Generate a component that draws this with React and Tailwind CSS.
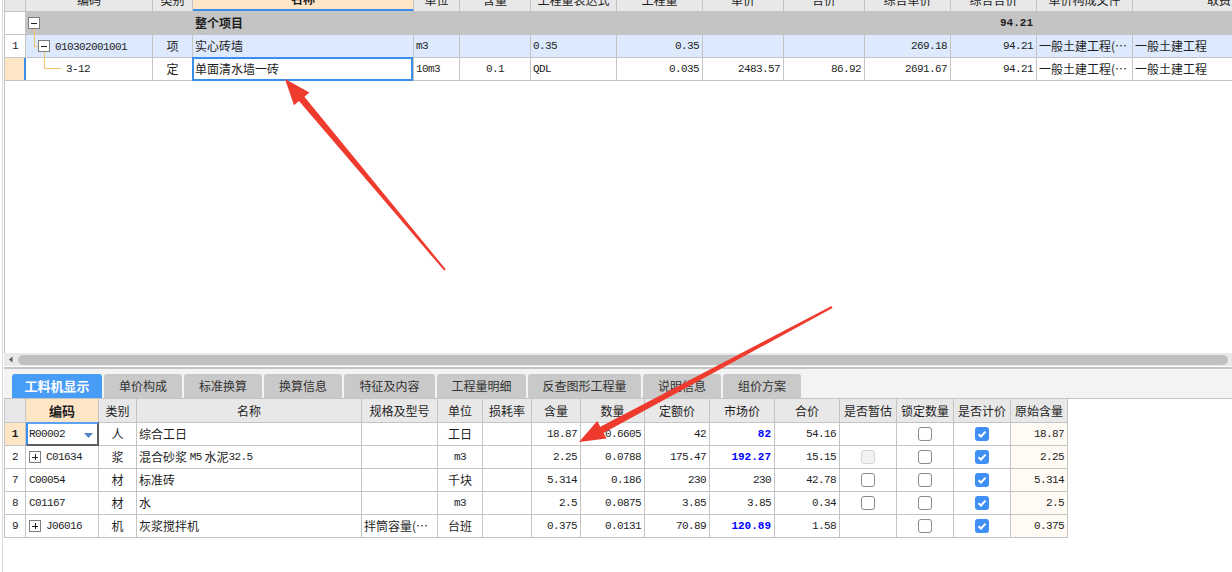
import React from "react";

const mono = "font-['Liberation_Mono',monospace] text-[11px] tracking-[-0.6px]";
const monoB = "font-['Liberation_Mono',monospace] text-[11px] font-bold";

const topW = [
  "w-[21px]", "w-[127px]", "w-[40px]", "w-[221px]", "w-[46px]", "w-[71px]", "w-[86px]",
  "w-[86px]", "w-[81px]", "w-[81px]", "w-[86px]", "w-[86px]", "w-[96px]", "w-[197px]",
];
const topHead = [
  "", "编码", "类别", "名称", "单位", "含量", "工程量表达式", "工程量", "单价", "合价",
  "综合单价", "综合合价", "单价构成文件", "取费专业",
];

const botW = [
  "w-[21px]", "w-[73px]", "w-[38px]", "w-[225px]", "w-[76px]", "w-[45px]", "w-[49px]", "w-[49px]",
  "w-[64px]", "w-[65px]", "w-[65px]", "w-[65px]", "w-[57px]", "w-[57px]", "w-[57px]", "w-[57px]",
];
const botHead = [
  "", "编码", "类别", "名称", "规格及型号", "单位", "损耗率", "含量", "数量", "定额价",
  "市场价", "合价", "是否暂估", "锁定数量", "是否计价", "原始含量",
];

const botRows = [
  { n: "1", code: "R00002", t: "人", name: "综合工日", spec: "", unit: "工日", hl: "18.87", sl: "0.6605", de: "42", mk: "82", mkB: true, hj: "54.16", zg: null, orig: "18.87" },
  { n: "2", code: "C01634", plus: true, t: "浆", name: "mix", spec: "", unit: "m3", hl: "2.25", sl: "0.0788", de: "175.47", mk: "192.27", mkB: true, hj: "15.15", zg: "off", orig: "2.25" },
  { n: "7", code: "C00054", t: "材", name: "标准砖", spec: "", unit: "千块", hl: "5.314", sl: "0.186", de: "230", mk: "230", hj: "42.78", zg: "un", orig: "5.314" },
  { n: "8", code: "C01167", t: "材", name: "水", spec: "", unit: "m3", hl: "2.5", sl: "0.0875", de: "3.85", mk: "3.85", hj: "0.34", zg: "un", orig: "2.5" },
  { n: "9", code: "J06016", plus: true, t: "机", name: "灰浆搅拌机", spec: "拌筒容量(…", unit: "台班", hl: "0.375", sl: "0.0131", de: "70.89", mk: "120.89", mkB: true, hj: "1.58", zg: null, orig: "0.375" },
];

const tabs = [
  ["工料机显示", "w-[90px]"], ["单价构成", "w-[78px]"], ["标准换算", "w-[78px]"], ["换算信息", "w-[78px]"],
  ["特征及内容", "w-[91px]"], ["工程量明细", "w-[89px]"], ["反查图形工程量", "w-[113px]"],
  ["说明信息", "w-[78px]"], ["组价方案", "w-[78px]"],
];

function Cell({ w, className = "", children }) {
  return (
    <div className={`${w} shrink-0 h-full border-r border-[#c4c4c4] flex items-center overflow-hidden whitespace-nowrap ${className}`}>
      {children}
    </div>
  );
}

function Num({ children, bold, blue }) {
  return <span className={`${bold ? monoB : mono} ${blue ? "text-[#0000ff]" : ""}`}>{children}</span>;
}

function TBox({ plus }) {
  return (
    <svg width="12" height="12" viewBox="0 0 12 12" className="shrink-0">
      <rect x="0.5" y="0.5" width="11" height="11" fill="#fff" stroke="#7c7c7c" />
      <path d="M3 6.5h6" stroke="#222" />
      {plus && <path d="M6.5 3v6" stroke="#222" />}
    </svg>
  );
}

function Check({ kind }) {
  if (kind === "on")
    return (
      <span className="w-[14px] h-[14px] rounded-[3px] bg-[#3f8ff5] flex items-center justify-center">
        <svg width="10" height="10" viewBox="0 0 10 10">
          <path d="M1.5 5.2 L4 7.5 L8.5 2.6" fill="none" stroke="#fff" strokeWidth="2" />
        </svg>
      </span>
    );
  if (kind === "off")
    return <span className="w-[14px] h-[14px] rounded-[3px] border border-[#d6d6d6] bg-[#f1f1f1]" />;
  return <span className="w-[14px] h-[14px] rounded-[3px] border border-[#8a8a8a] bg-white" />;
}

const tl = "absolute bg-[#f7c46c]";

function TopTable() {
  return (
    <div className="h-[353px] overflow-hidden border-l border-[#c4c4c4] bg-white">
      {/* header, scrolled half out of view */}
      <div className="flex h-[23px] -mt-[11px] border-b border-[#c4c4c4] bg-[#e8e8e8]">
        {topHead.map((h, i) => (
          <Cell
            key={i}
            w={topW[i]}
            className={`justify-center ${i === 3 ? "bg-[#fde5c6] font-bold border-b-2 border-b-[#3b8eea]" : ""}`}
          >
            {h}
          </Cell>
        ))}
      </div>

      {/* 整个项目 */}
      <div className="flex h-[23px] border-b border-[#c4c4c4] bg-[#c4c4c4]">
        <Cell w={topW[0]} className="bg-white" />
        <Cell w={topW[1]} className="relative pl-[2px]">
          <TBox />
          <span className={`${tl} left-[8px] top-[17px] bottom-0 w-px`} />
        </Cell>
        <Cell w={topW[2]} />
        <Cell w={topW[3]} className="pl-[2px] font-bold text-[12px]">整个项目</Cell>
        {topW.slice(4, 11).map((w, i) => <Cell key={i} w={w} />)}
        <Cell w={topW[11]} className="justify-end pr-[3px]"><Num bold>94.21</Num></Cell>
        <Cell w={topW[12]} />
        <Cell w={topW[13]} />
      </div>

      {/* row 1 */}
      <div className="flex h-[23px] border-b border-[#c4c4c4] bg-[#dde9fc]">
        <Cell w={topW[0]} className="bg-white justify-center"><Num>1</Num></Cell>
        <Cell w={topW[1]} className="relative pl-[12px]">
          <span className={`${tl} left-[8px] top-0 h-[12px] w-px`} />
          <span className={`${tl} left-[8px] top-[11px] w-[4px] h-px`} />
          <span className={`${tl} left-[18px] top-[17px] bottom-0 w-px`} />
          <TBox />
          <span className="ml-[5px]"><Num>010302001001</Num></span>
        </Cell>
        <Cell w={topW[2]} className="justify-center">项</Cell>
        <Cell w={topW[3]} className="pl-[2px]">实心砖墙</Cell>
        <Cell w={topW[4]} className="pl-[2px]"><Num>m3</Num></Cell>
        <Cell w={topW[5]} />
        <Cell w={topW[6]} className="pl-[2px]"><Num>0.35</Num></Cell>
        <Cell w={topW[7]} className="justify-end pr-[3px]"><Num>0.35</Num></Cell>
        <Cell w={topW[8]} />
        <Cell w={topW[9]} />
        <Cell w={topW[10]} className="justify-end pr-[3px]"><Num>269.18</Num></Cell>
        <Cell w={topW[11]} className="justify-end pr-[3px]"><Num>94.21</Num></Cell>
        <Cell w={topW[12]} className="pl-[2px]">一般土建工程(…</Cell>
        <Cell w={topW[13]} className="pl-[2px]">一般土建工程</Cell>
      </div>

      {/* row 2 */}
      <div className="flex h-[23px] border-b border-[#c4c4c4] bg-white">
        <Cell w={topW[0]} className="bg-[#fde5c6] border-r-2 border-r-[#3b8eea]" />
        <Cell w={topW[1]} className="relative pl-[40px]">
          <span className={`${tl} left-[18px] top-0 h-[11px] w-px`} />
          <span className={`${tl} left-[18px] top-[10px] w-[17px] h-px`} />
          <Num>3-12</Num>
        </Cell>
        <Cell w={topW[2]} className="justify-center">定</Cell>
        <Cell w={topW[3]} className="relative pl-[2px] overflow-visible">
          <span className="absolute -top-px -left-px right-0 -bottom-px border-2 border-[#3b8eea]" />
          单面清水墙一砖
        </Cell>
        <Cell w={topW[4]} className="pl-[2px]"><Num>10m3</Num></Cell>
        <Cell w={topW[5]} className="justify-center"><Num>0.1</Num></Cell>
        <Cell w={topW[6]} className="pl-[2px]"><Num>QDL</Num></Cell>
        <Cell w={topW[7]} className="justify-end pr-[3px]"><Num>0.035</Num></Cell>
        <Cell w={topW[8]} className="justify-end pr-[3px]"><Num>2483.57</Num></Cell>
        <Cell w={topW[9]} className="justify-end pr-[3px]"><Num>86.92</Num></Cell>
        <Cell w={topW[10]} className="justify-end pr-[3px]"><Num>2691.67</Num></Cell>
        <Cell w={topW[11]} className="justify-end pr-[3px]"><Num>94.21</Num></Cell>
        <Cell w={topW[12]} className="pl-[2px]">一般土建工程(…</Cell>
        <Cell w={topW[13]} className="pl-[2px]">一般土建工程</Cell>
      </div>
    </div>
  );
}

function BottomTable() {
  return (
    <div className="w-[1064px] border-l border-[#c4c4c4]">
      <div className="flex h-[24px] border-b border-[#c4c4c4] bg-[#e8e8e8]">
        {botHead.map((h, i) => (
          <Cell key={i} w={botW[i]} className={`justify-center ${i === 1 ? "bg-[#fde5c6] font-bold text-[13px]" : ""}`}>
            {h}
          </Cell>
        ))}
      </div>
      {botRows.map((r, idx) => (
        <div key={r.n} className="flex h-[23px] border-b border-[#c4c4c4] bg-white">
          <Cell w={botW[0]} className={`justify-center ${idx === 0 ? "bg-[#fde5c6]" : ""}`}>
            <Num bold={idx === 0}>{r.n}</Num>
          </Cell>
          <Cell w={botW[1]} className={`relative pl-[3px] ${idx === 0 ? "overflow-visible" : ""}`}>
            {idx === 0 && (
              <>
                <span className="absolute -top-px left-0 -right-px -bottom-px border-2 border-[#5e5e5e] border-t-[#5aa2f5] border-l-[#3b8eea]" />
                <svg width="9" height="6" viewBox="0 0 9 6" className="absolute left-[58px] top-[10px]">
                  <path d="M0 0h9L4.5 5z" fill="#4f86c6" />
                </svg>
              </>
            )}
            {r.plus && <span className="mr-[5px]"><TBox plus /></span>}
            <Num>{r.code}</Num>
          </Cell>
          <Cell w={botW[2]} className="justify-center">{r.t}</Cell>
          <Cell w={botW[3]} className="pl-[2px]">
            {r.name === "mix" ? (
              <>
                <span>混合砂浆&nbsp;</span>
                <Num>M5</Num>
                <span>&nbsp;水泥</span>
                <Num>32.5</Num>
              </>
            ) : (
              r.name
            )}
          </Cell>
          <Cell w={botW[4]} className="pl-[2px]">{r.spec}</Cell>
          <Cell w={botW[5]} className="justify-center">
            {r.unit === "m3" ? <Num>m3</Num> : r.unit}
          </Cell>
          <Cell w={botW[6]} />
          <Cell w={botW[7]} className="justify-end pr-[3px]"><Num>{r.hl}</Num></Cell>
          <Cell w={botW[8]} className="justify-end pr-[3px]"><Num>{r.sl}</Num></Cell>
          <Cell w={botW[9]} className="justify-end pr-[3px]"><Num>{r.de}</Num></Cell>
          <Cell w={botW[10]} className="justify-end pr-[3px]">
            <Num bold={r.mkB} blue={r.mkB}>{r.mk}</Num>
          </Cell>
          <Cell w={botW[11]} className="justify-end pr-[3px]"><Num>{r.hj}</Num></Cell>
          <Cell w={botW[12]} className="justify-center">{r.zg && <Check kind={r.zg} />}</Cell>
          <Cell w={botW[13]} className="justify-center"><Check kind="un" /></Cell>
          <Cell w={botW[14]} className="justify-center"><Check kind="on" /></Cell>
          <Cell w={botW[15]} className="justify-end pr-[3px] bg-[#fffaf4]"><Num>{r.orig}</Num></Cell>
        </div>
      ))}
    </div>
  );
}

export default function App() {
  return (
    <div className="relative w-[1232px] h-[572px] overflow-hidden bg-white flex font-['Noto_Sans_CJK_SC',sans-serif] text-[12px] text-[#1e1e1e]">
      <div className="w-[4px] shrink-0 flex">
        <div className="ml-[2px] w-px bg-[#d8d8d8]" />
      </div>
      <div className="flex-1 min-w-0 flex flex-col">
        <TopTable />

        {/* horizontal scrollbar */}
        <div className="h-[13px] bg-[#e9e9e9] flex items-center">
          <svg width="14" height="13" viewBox="0 0 14 13" className="shrink-0">
            <path d="M5 6.5 L8.5 3.5 V9.5 Z" fill="#555" />
          </svg>
          <div className="flex-1 h-[10px] rounded-full bg-[#c1c1c1] mr-[4px]" />
        </div>
        <div className="h-[1px] bg-white" />
        <div className="h-[2px] bg-[#c4c4c4]" />

        {/* tabs */}
        <div className="h-[30px] bg-[#f3f3f3] border-b border-[#c4c4c4] pt-[5px] pl-[8px] flex gap-[2px]">
          {tabs.map(([t, w], i) => (
            <div
              key={t}
              className={`${w} h-[24px] rounded-t-[3px] flex items-center justify-center ${
                i === 0 ? "bg-[#479cf6] text-white font-bold text-[13px]" : "bg-[#c9c9c9] text-[#333]"
              }`}
            >
              {t}
            </div>
          ))}
        </div>

        <BottomTable />
      </div>

      {/* red annotation arrows */}
      <svg width="1232" height="572" className="absolute inset-0 pointer-events-none">
        <polygon
          points="445.8,269.4 304.4,96.7 309.4,92.5 285,79 294,105.3 299,101.1 444.2,270.6"
          fill="#ef3a2e"
        />
        <polygon
          points="831.5,306.1 600.3,426.7 597.2,421 579,442 606.6,438.6 603.5,432.9 832.5,307.9"
          fill="#ef3a2e"
        />
      </svg>
    </div>
  );
}
